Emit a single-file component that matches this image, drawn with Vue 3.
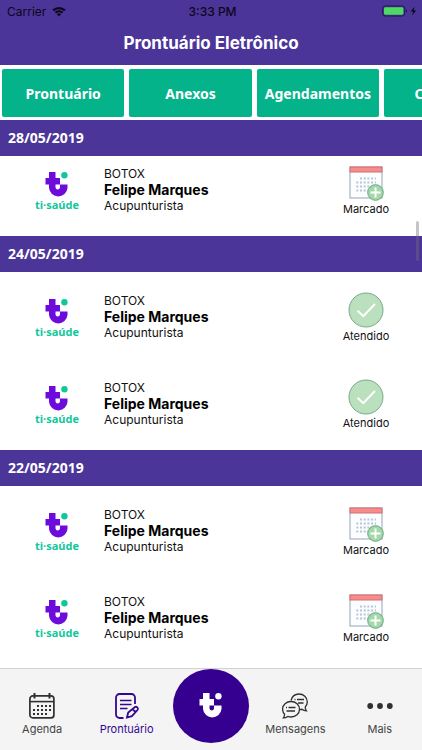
<template>
  <div class="app">
    <header class="top">
      <div class="status">
        <div class="carrier">
          <span>Carrier</span>
          <svg class="wifi" viewBox="0 0 14 11">
            <path d="M0.4 3.6a9.6 9.6 0 0 1 13.2 0l-1.5 1.6a7.4 7.4 0 0 0-10.2 0z" />
            <path d="M2.7 6a6.2 6.2 0 0 1 8.6 0l-1.5 1.6a4 4 0 0 0-5.6 0z" />
            <path d="M4.9 8.3a3 3 0 0 1 4.2 0L7 10.6z" />
          </svg>
        </div>
        <span class="time">3:33 PM</span>
        <div class="power">
          <svg class="battery" viewBox="0 0 36 12">
            <rect x="0.7" y="1" width="22" height="10" rx="2.4" fill="none" stroke="#211747" />
            <rect x="2" y="2.3" width="19.4" height="7.4" rx="1.4" fill="#4cd964" />
            <path d="M24 4.500a1.6 1.6 0 0 1 0 3z" fill="#211747" />
            <path d="M32.8 1.5L28.6 6.6h2.6l-1.2 4 4.2-5.2h-2.6z" fill="#0b0718" />
          </svg>
        </div>
      </div>
      <h1 class="title">Prontuário Eletrônico</h1>
    </header>

    <nav class="tabs">
      <button v-for="tab in tabs" :key="tab" class="tab" type="button">{{ tab }}</button>
    </nav>

    <main class="content">
      <section v-for="group in groups" :key="group.date" class="group">
        <h2 class="date">{{ group.date }}</h2>
        <ul class="list">
          <li v-for="(item, index) in group.items" :key="index" class="row">
            <div class="brand">
              <svg class="mark" viewBox="0 0 24 26">
                <path
                  d="M4 0h6.5v6H15v6.500h7.500v3.500a9.300 9.500 0 0 1-18.500 0v-3.500H.5V6H4zM10.500 12.500v3a2.300 2.500 0 0 0 4.500 0v-3z"
                  fill="#6d0bdc"
                  fill-rule="evenodd"
                />
                <circle cx="19.4" cy="3.3" r="3.2" fill="#10c79a" />
              </svg>
              <span class="brand-name">ti·saúde</span>
            </div>
            <div class="info">
              <span>BOTOX</span>
              <strong>Felipe Marques</strong>
              <span>Acupunturista</span>
            </div>
            <div class="state">
              <svg v-if="item === 'Marcado'" class="state-icon" viewBox="0 0 36 36">
                <rect x="2" y="2" width="32" height="31" fill="#fbfdff" stroke="#93a5b5" />
                <rect x="2" y="2" width="32" height="5" fill="#f98b8b" stroke="#d16f74" />
                <path
                  d="M12 13.500h16M8.300 17.500H28M8.300 21.500H28M8.300 25.500H20"
                  stroke="#b9c6d5"
                  stroke-width="2"
                  stroke-dasharray="2 1.700"
                />
                <circle cx="27.5" cy="27.5" r="7.8" fill="#a3d9a9" stroke="#69a581" />
                <path d="M27.500 22.500v10M22.500 27.500h10" stroke="#fff" stroke-width="2" />
              </svg>
              <svg v-else class="state-icon" viewBox="0 0 36 36">
                <circle cx="18" cy="18" r="17" fill="#bae0bd" stroke="#78a98c" />
                <path d="M9.500 18.700l5.800 5.500L27 12" fill="none" stroke="#fff" stroke-width="2" />
              </svg>
              <span>{{ item }}</span>
            </div>
          </li>
        </ul>
      </section>
      <span class="scroll-thumb"></span>
    </main>

    <nav class="bottom">
      <a class="item" href="#agenda">
        <svg class="icon" viewBox="0 0 26 26" fill="none" stroke="#303030">
          <rect x="0.9" y="2.9" width="24" height="22" rx="3" stroke-width="1.7" />
          <path d="M1 8.600h24" stroke-width="1.6" />
          <path d="M5.500 0v5.500M20.500 0v5.500" stroke-width="2" />
          <path d="M8 13h14M4 17h18M4 21h14" stroke-width="1.9" stroke-dasharray="2 2" />
        </svg>
        <span>Agenda</span>
      </a>
      <a class="item active" href="#prontuario">
        <svg class="icon" viewBox="0 0 26 26" fill="none" stroke="#35078f" stroke-width="1.8">
          <path d="M9.500 25H5.500A3.500 3.500 0 0 1 2 21.500v-17A3.500 3.500 0 0 1 5.500 1h12A3.500 3.500 0 0 1 21 4.500V11" />
          <path d="M6 7.500h11.500M6 11.500h11.500M6 15.500h7.500" stroke-width="1.5" />
          <path d="M13 24.500l1.200-5 6.500-5.300a2 2 0 0 1 2.800 2.800l-5.600 6.200zM18.500 16l3 3" stroke-width="1.8" />
        </svg>
        <span>Prontuário</span>
      </a>
      <div class="center">
        <button class="home" type="button" aria-label="Início">
          <svg class="home-mark" viewBox="0 0 24 26">
            <path
              d="M4 0h6.500v6H15v6.500h7.500v3.500a9.300 9.500 0 0 1-18.500 0v-3.500H.5V6H4zM10.500 12.500v3a2.300 2.500 0 0 0 4.500 0v-3z"
              fill-rule="evenodd"
            />
            <circle cx="19.4" cy="3.3" r="3.2" />
          </svg>
        </button>
      </div>
      <a class="item" href="#mensagens">
        <svg class="icon" viewBox="0 0 26 26" fill="none" stroke="#303030" stroke-width="1.3">
          <path d="M9 7.500C10 3.500 13 1 17 1c4.500 0 8.300 3.500 8.300 7.800 0 2.200-.8 3.900-2.100 5.300 0 1.500.4 2.700 1.200 3.700-1.700 0-3.200-.5-4.500-1.500l-2.200.3" />
          <path d="M9 8.500c4.800 0 8.500 3.400 8.500 7.700S13.800 24 9 24c-1.200 0-2.200-.2-3.200-.6-1.300 1-2.800 1.500-4.400 1.500.8-1 1.200-2.200 1.200-3.600C1.300 20 .6 18.200.6 16.200.6 11.900 4.300 8.500 9 8.500z" />
          <path d="M15 6.500h7M12.500 6.500h1M16 10h5.500M6.500 14.500h7M4 14.500h1M4.500 18H13" />
        </svg>
        <span>Mensagens</span>
      </a>
      <a class="item" href="#mais">
        <svg class="icon" viewBox="0 0 26 26" fill="#303030">
          <circle cx="3.2" cy="13" r="2.9" />
          <circle cx="13" cy="13" r="2.9" />
          <circle cx="22.8" cy="13" r="2.9" />
        </svg>
        <span>Mais</span>
      </a>
    </nav>
  </div>
</template>

<script setup>
import { ref } from "vue"

const tabs = ref(["Prontuário", "Anexos", "Agendamentos", "Consulta"])

const groups = ref([
  { date: "28/05/2019", items: ["Marcado"] },
  { date: "24/05/2019", items: ["Atendido", "Atendido"] },
  { date: "22/05/2019", items: ["Marcado", "Marcado"] },
])
</script>

<style>
body {
  margin: 0;
}
</style>

<style scoped>
.app {
  height: 100vh;
  display: flex;
  flex-direction: column;
  background: #fff;
  color: #111;
  font-family: Inter, "Liberation Sans", sans-serif;
  font-size: 12px;
  overflow: hidden;
}
.top {
  background: #4c3599;
  flex: none;
}
.status {
  display: grid;
  grid-template-columns: 1fr auto 1fr;
  align-items: center;
  height: 22px;
  padding: 0 4px 0 7px;
  color: #0b0718;
}
.carrier {
  display: flex;
  align-items: center;
  gap: 6px;
}
.wifi {
  width: 14px;
  height: 11px;
  fill: #0b0718;
}
.time {
  font-weight: 500;
}
.power {
  display: flex;
  justify-content: flex-end;
}
.battery {
  width: 36px;
  height: 12px;
}
.title {
  margin: 0;
  height: 43px;
  line-height: 42px;
  text-align: center;
  color: #fff;
  font-size: 17px;
  font-weight: 700;
}
.tabs {
  flex: none;
  display: flex;
  gap: 5px;
  padding: 4px 2px 2px;
  overflow: hidden;
}
.tab {
  flex: 0 0 29vw;
  height: 48px;
  padding: 0;
  border: none;
  border-radius: 2px;
  background: #05b38b;
  color: #fff;
  font-family: "Noto Sans", sans-serif;
  font-size: 14px;
  font-weight: 700;
}
.content {
  position: relative;
  flex: 1;
  min-height: 0;
  padding-top: 1px;
  overflow-y: auto;
  scrollbar-width: none;
}
.date {
  position: sticky;
  top: 0;
  z-index: 1;
  margin: 0;
  padding: 0 8px;
  background: #4c3599;
  color: #fff;
  font-family: "Noto Sans", sans-serif;
  font-size: 14px;
  font-weight: 700;
  line-height: 36px;
}
.list {
  margin: 0;
  padding: 2px 0;
  list-style: none;
}
.group:first-child .list {
  margin-top: -11px;
}
.row {
  display: flex;
  align-items: center;
  height: 87px;
  padding: 0 16px 0 10px;
}
.brand {
  flex: none;
  width: 94px;
  padding-top: 2px;
  display: flex;
  flex-direction: column;
  align-items: center;
}
.mark {
  width: 24px;
  height: 26px;
}
.brand-name {
  color: #10c79a;
  font-family: "Open Sans", sans-serif;
  font-size: 11px;
  font-weight: 700;
  line-height: 14px;
}
.info {
  flex: 1;
  padding-bottom: 2px;
  display: flex;
  flex-direction: column;
  line-height: 16px;
}
.info strong {
  color: #000;
  font-size: 14px;
  font-weight: 700;
}
.state {
  flex: none;
  width: 80px;
  display: flex;
  flex-direction: column;
  align-items: center;
  font-size: 11px;
  line-height: 16px;
}
.state-icon {
  width: 36px;
  height: 36px;
}
.scroll-thumb {
  position: absolute;
  top: 102px;
  right: 3px;
  z-index: 2;
  width: 3px;
  height: 40px;
  border-radius: 2px;
  background: rgba(110, 110, 120, 0.4);
}
.bottom {
  flex: none;
  display: grid;
  grid-template-columns: repeat(5, 1fr);
  height: 81px;
  border-top: 1px solid #d2d2d2;
  background: #f4f4f4;
}
.item {
  display: flex;
  flex-direction: column;
  align-items: center;
  gap: 2px;
  padding-top: 24px;
  color: #444;
  font-size: 11px;
  line-height: 16px;
  text-decoration: none;
}
.item.active {
  color: #35078f;
}
.icon {
  width: 26px;
  height: 26px;
}
.center {
  display: flex;
  justify-content: center;
}
.home {
  display: flex;
  align-items: center;
  justify-content: center;
  width: 76px;
  height: 74px;
  padding: 0;
  border: none;
  border-radius: 50%;
  background: #35008f;
}
.home-mark {
  width: 24px;
  height: 26px;
  fill: #fff;
}
</style>
